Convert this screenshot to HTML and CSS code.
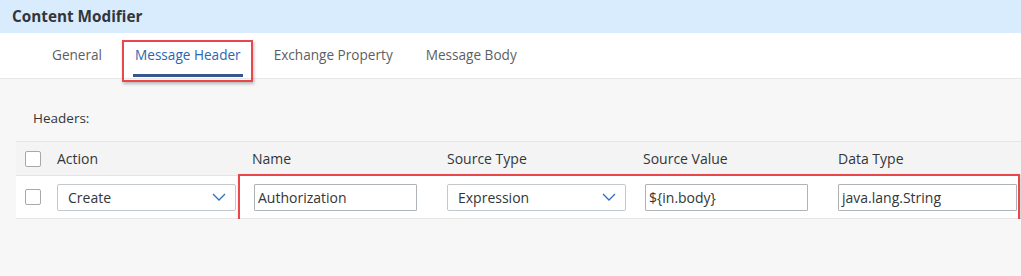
FILE: index.html
```html
<!DOCTYPE html>
<html lang="en">
<head>
    <meta charset="UTF-8">
    <meta name="viewport" content="width=device-width, initial-scale=1.0">
    <title>Content Modifier</title>
    <link rel="stylesheet" href="styles.css">
</head>
<body>
    <div class="titlebar">Content Modifier</div>

    <div class="tabs">
        <div class="tab">General</div>
        <div class="tab active">Message Header</div>
        <div class="tab">Exchange Property</div>
        <div class="tab">Message Body</div>
    </div>

    <div class="content">
        <div class="section-label">Headers:</div>

        <div class="table">
            <div class="row head">
                <div class="cell check"><span class="checkbox"></span></div>
                <div class="cell">Action</div>
                <div class="cell">Name</div>
                <div class="cell">Source Type</div>
                <div class="cell">Source Value</div>
                <div class="cell">Data Type</div>
            </div>
            <div class="row-wrap">
                <div class="row data">
                    <div class="cell check"><span class="checkbox"></span></div>
                    <div class="cell">
                        <div class="select">
                            <span>Create</span>
                            <svg class="chevron" width="14" height="8" viewBox="0 0 14 8"><path d="M1 1 L7 7 L13 1" fill="none" stroke="#2f6fc0" stroke-width="1.3"/></svg>
                        </div>
                    </div>
                    <div class="cell"><div class="input short">Authorization</div></div>
                    <div class="cell">
                        <div class="select">
                            <span>Expression</span>
                            <svg class="chevron" width="14" height="8" viewBox="0 0 14 8"><path d="M1 1 L7 7 L13 1" fill="none" stroke="#2f6fc0" stroke-width="1.3"/></svg>
                        </div>
                    </div>
                    <div class="cell"><div class="input short">${in.body}</div></div>
                    <div class="cell"><div class="input">java.lang.String</div></div>
                </div>
                <div class="highlight"></div>
            </div>
        </div>
    </div>
</body>
</html>
```

FILE: styles.css
```css
body {
    margin: 0;
    font-family: "Open Sans", "Noto Sans", Arial, sans-serif;
    color: #32363a;
    background-color: #f7f7f7;
    font-size: 14px;
}
.titlebar {
    height: 33px;
    line-height: 33px;
    padding-left: 12px;
    background-color: #d9ecfd;
    font-size: 15.3px;
    font-weight: bold;
    color: #32363a;
}
.tabs {
    display: flex;
    gap: 33px;
    height: 45px;
    padding-left: 52px;
    background-color: #fff;
    border-bottom: 1px solid #e8e8e8;
}
.tab {
    position: relative;
    line-height: 44px;
    color: #5c5f62;
    font-size: 13.6px;
}
.tab.active {
    color: #2b66b1;
}
.tab.active::before {
    content: "";
    position: absolute;
    left: -2px;
    right: -2px;
    bottom: 1px;
    height: 3px;
    background-color: #35568f;
}
.tab.active::after {
    content: "";
    position: absolute;
    left: -13px;
    right: -12px;
    top: 7px;
    bottom: -4px;
    border: 2px solid #e8474c;
    box-shadow: 1px 2px 3px rgba(0, 0, 0, 0.25);
}
.content {
    padding-top: 29px;
}
.section-label {
    padding-left: 33px;
    line-height: 20px;
    font-size: 13.5px;
    margin-bottom: 13px;
}
.table {
    margin-left: 16px;
    border-top: 1px solid #e5e5e5;
}
.row {
    display: grid;
    grid-template-columns: 41px 195px 195px 196px 195px 1fr;
    align-items: center;
    border-bottom: 1px solid #e5e5e5;
}
.row.head {
    height: 33px;
    background-color: #f4f4f4;
}
.row-wrap {
    position: relative;
}
.row.data {
    height: 42px;
    background-color: #fff;
}
.cell.check {
    padding-left: 9px;
}
.checkbox {
    display: block;
    width: 14px;
    height: 14px;
    border: 1px solid #a6a9ac;
    border-radius: 2px;
    background-color: #fff;
}
.select {
    display: flex;
    align-items: center;
    justify-content: space-between;
    width: 158px;
    height: 25px;
    padding: 0 9px 0 10px;
    border: 1px solid #c3c8cc;
    border-radius: 2px;
    background-color: #fff;
}
.input {
    width: 174px;
    height: 25px;
    line-height: 25px;
    padding-left: 3px;
    border: 1px solid #aeb3b7;
    border-radius: 1px;
    background-color: #fff;
}
.input.short {
    width: 158px;
    margin-left: 2px;
}
.highlight {
    position: absolute;
    left: 222px;
    right: 1px;
    top: -2px;
    bottom: -3px;
    border: 2px solid #e8474c;
    box-shadow: 1px 2px 3px rgba(0, 0, 0, 0.25);
}
```
